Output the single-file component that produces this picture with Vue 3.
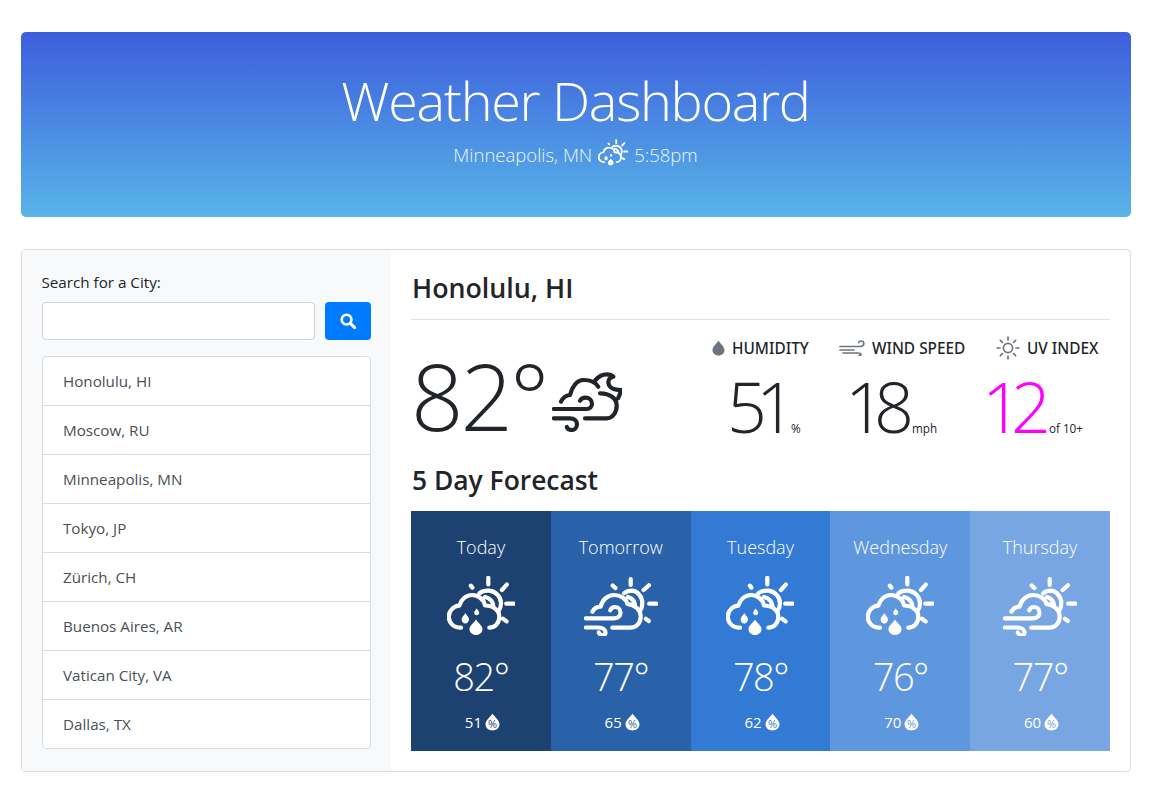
<template>
  <div class="container">
    <svg class="defs" width="0" height="0">
      <symbol id="rain-sun" viewBox="0 0 68 60">
        <g fill="none" stroke="currentColor" stroke-width="4.2" stroke-linecap="round" stroke-linejoin="round">
          <path d="M14 51.7C6 51.7 1.8 46.5 1.8 40.7C1.8 35 6.5 30 12.3 29.7C14 23.5 19 19 25 19C31.5 19 37 23.5 38 29.5C46.5 29.5 52.3 34.5 52.3 40.7C52.3 47 48 51.7 42.3 51.7"/>
          <path d="M32.3 17.3C35 15 38.5 14.5 42.3 14.7C49 15.5 54 21 54 27.3C54 30.5 53 33.3 51.3 35.7"/>
          <path d="M38 21C42 22 46 25 46.5 30.5"/>
          <path d="M41.3 1.8V8.5M23.8 9.6L25.4 11.6M54.9 14L59.8 8.6M59.2 27.7H66.8M56 42.8L59.6 45.4"/>
        </g>
        <path fill="currentColor" d="M29 43.5C31 47 35.5 49.5 35.5 53C35.5 56.6 32.6 59 29 59C25.4 59 22.5 56.6 22.5 53C22.5 49.5 27 47 29 43.5ZM18.3 37C19.5 39.3 22 41 22 43.5C22 45.8 20.3 47.5 18.3 47.5C16.3 47.5 14.6 45.8 14.6 43.5C14.6 41 17.1 39.3 18.3 37ZM29.7 32.5C30.5 34 32.2 35 32.2 36.7C32.2 38.2 31.1 39.2 29.7 39.2C28.3 39.2 27.2 38.2 27.2 36.7C27.2 35 28.9 34 29.7 32.5Z"/>
      </symbol>
      <symbol id="wind-sun" viewBox="0 0 74 60">
        <g fill="none" stroke="currentColor" stroke-width="4.2" stroke-linecap="round" stroke-linejoin="round">
          <path d="M8.4 35.7C10 32.5 13 30.7 16.7 30.7C18 24 23.5 19 30 19C36.5 19 42 22.5 43.3 27.8C51 28.5 56.7 34 56.7 40.7C56.7 47 52 51.7 46.7 51.7H28.3"/>
          <path d="M40 17.3C42.5 15.3 45 14.7 48.3 14.7C54 15.3 58.3 21 58.3 27.3C58.3 30 57.6 32.5 56.3 34.5"/>
          <path d="M44 21C47.5 22 50.5 25 51 29.5"/>
          <path d="M46.7 3.2V9M28.7 9.4L31.4 12.1M59.6 14L65 9.2M65.2 27.7H72.4M61.9 42.8L64.8 45"/>
          <path d="M1.8 42.3H30C34.5 42.3 36.5 39.5 36.5 36.5C36.5 33.2 33.8 31 31 31C28.6 31 26.8 32.5 26.2 34.3"/>
          <path d="M1.8 51.5H14.5C19 51.5 21.5 54 21.5 56.5C21.5 59 18.8 60 17.2 59C15.8 58.3 15 57.3 14.8 56.3"/>
        </g>
      </symbol>
      <symbol id="wind-moon" viewBox="0 0 70 60">
        <g fill="none" stroke="currentColor" stroke-width="4.2" stroke-linecap="round" stroke-linejoin="round">
          <path d="M1.8 37H34.7C38 37 40 34.5 40 31.8C40 28 37 25.7 33.5 25.7C31 25.7 29 27 28 28.7"/>
          <path d="M1.8 46.3H18C22.5 46.3 25 49 25 52C25 55.8 22.5 58 19.8 58C17.5 58 15.5 56.8 14.8 55"/>
          <path d="M9 29.7C11 25.5 14 23.3 18 23C20 14.5 25 8 31.5 8C38 8 44 10.5 46.3 14.7"/>
          <path d="M48 21.3C58 21.3 64.7 26.5 64.7 33.5C64.7 41 60 46.3 54.7 46.3H33"/>
          <path d="M43.5 8C47 4 51 2.3 54.7 2.3C57.5 2.3 59.8 3 61.3 4.7C58 5.5 56.3 7.5 56.3 10C56.3 14.5 60.5 18 69 18C68.3 21 67.5 24 66 26.3"/>
        </g>
      </symbol>
    </svg>

    <header class="banner">
      <h1 class="banner-title">Weather Dashboard</h1>
      <div class="banner-sub">
        <span>Minneapolis, MN</span>
        <svg class="banner-icon"><use href="#rain-sun" /></svg>
        <span>5:58pm</span>
      </div>
    </header>

    <main class="panel">
      <aside class="sidebar">
        <label class="search-label" for="city">Search for a City:</label>
        <div class="search-row">
          <input id="city" class="search-input" type="text" />
          <button class="search-btn" aria-label="Search">
            <svg width="16" height="16" viewBox="0 0 16 16" fill="none" stroke="#fff" stroke-linecap="round">
              <circle cx="6.6" cy="6.6" r="4.9" stroke-width="2.6" />
              <path d="M10.4 10.4L14.6 14.6" stroke-width="3" />
            </svg>
          </button>
        </div>
        <ul class="city-list">
          <li v-for="city in cities" :key="city">{{ city }}</li>
        </ul>
      </aside>

      <section class="content">
        <h2 class="city-name">Honolulu, HI</h2>
        <div class="now">
          <div class="now-temp">
            <span class="now-deg">82°</span>
            <svg class="now-icon"><use href="#wind-moon" /></svg>
          </div>
          <div class="stats">
            <div class="stat stat-hum">
              <div class="stat-head">
                <svg width="13" height="16" viewBox="0 0 13 16"><path fill="#6c757d" d="M6.5 0.5C8 3.5 12.5 6.5 12.5 10C12.5 13.3 9.8 15.5 6.5 15.5C3.2 15.5 0.5 13.3 0.5 10C0.5 6.5 5 3.5 6.5 0.5Z"/></svg>
                <span>Humidity</span>
              </div>
              <div class="stat-val"><b>51</b><small>%</small></div>
            </div>
            <div class="stat stat-wind">
              <div class="stat-head">
                <svg width="26" height="16" viewBox="0 0 26 16" fill="none" stroke="#6c757d" stroke-width="1.7" stroke-linecap="round">
                  <path d="M1 6.5H20.5C23 6.5 24.8 5.5 24.8 3.6C24.8 2 23.4 1 22 1C21 1 20 1.5 19.6 2.4"/>
                  <path d="M1 10H15"/>
                  <path d="M4 13H19C21 13 22 13.5 22 14.5C22 15.3 21 15.6 20 15.3"/>
                </svg>
                <span>Wind Speed</span>
              </div>
              <div class="stat-val"><b>18</b><small>mph</small></div>
            </div>
            <div class="stat stat-uv">
              <div class="stat-head">
                <svg width="24" height="24" viewBox="0 0 24 24" fill="none" stroke="#6c757d" stroke-width="1.7" stroke-linecap="round">
                  <circle cx="12" cy="12" r="4.6" />
                  <path d="M12 1.2V4M12 20V22.8M1.2 12H4M20 12H22.8M4.4 4.4L6.3 6.3M17.7 17.7L19.6 19.6M4.4 19.6L6.3 17.7M17.7 6.3L19.6 4.4"/>
                </svg>
                <span>UV Index</span>
              </div>
              <div class="stat-val uv"><b>12</b><small>of 10+</small></div>
            </div>
          </div>
        </div>

        <h3 class="forecast-title">5 Day Forecast</h3>
        <div class="forecast">
          <div v-for="day in forecast" :key="day.name" class="day" :style="{ background: day.color }">
            <div class="day-name">{{ day.name }}</div>
            <svg class="day-icon" :class="{ wide: day.icon === 'wind-sun' }"><use :href="'#' + day.icon" /></svg>
            <div class="day-temp">{{ day.temp }}°</div>
            <div class="day-hum">
              <span>{{ day.hum }}</span>
              <svg width="15" height="18" viewBox="0 0 15 18">
                <path fill="#fff" d="M7.5 0.5C9 3.5 14.5 7 14.5 11.3C14.5 15 11.4 17.5 7.5 17.5C3.6 17.5 0.5 15 0.5 11.3C0.5 7 6 3.5 7.5 0.5Z"/>
                <text x="7.5" y="14.6" text-anchor="middle" class="drop-text" :fill="day.color">%</text>
              </svg>
            </div>
          </div>
        </div>
      </section>
    </main>
  </div>
</template>

<script setup>
const cities = [
  'Honolulu, HI',
  'Moscow, RU',
  'Minneapolis, MN',
  'Tokyo, JP',
  'Zürich, CH',
  'Buenos Aires, AR',
  'Vatican City, VA',
  'Dallas, TX',
];

const forecast = [
  { name: 'Today', temp: 82, hum: 51, icon: 'rain-sun', color: '#1d4271' },
  { name: 'Tomorrow', temp: 77, hum: 65, icon: 'wind-sun', color: '#2a62a9' },
  { name: 'Tuesday', temp: 78, hum: 62, icon: 'rain-sun', color: '#337ad5' },
  { name: 'Wednesday', temp: 76, hum: 70, icon: 'rain-sun', color: '#5f97df' },
  { name: 'Thursday', temp: 77, hum: 60, icon: 'wind-sun', color: '#77a6e3' },
];
</script>

<style>
html, body {
  margin: 0;
  background: #fff;
}
</style>

<style scoped>
.container {
  width: 1110px;
  margin: 0 auto;
  padding-top: 32px;
  font-family: "Open Sans", "Noto Sans", sans-serif;
  font-size: 15.2px;
  color: #212529;
  box-sizing: border-box;
}
.defs {
  position: absolute;
}
.banner {
  height: 185px;
  box-sizing: border-box;
  padding-top: 31px;
  border-radius: 5px;
  background: linear-gradient(#3d5edc, #58b4e8);
  text-align: center;
  color: #fff;
}
.banner-title {
  margin: 0;
  font-size: 54px;
  font-weight: 300;
  letter-spacing: -1.3px;
  line-height: 74px;
}
.banner-sub {
  display: flex;
  justify-content: center;
  align-items: center;
  gap: 6px;
  height: 30px;
  margin-top: 2px;
  font-size: 18.5px;
  font-weight: 300;
  color: #eaf7ff;
}
.banner-icon {
  width: 30px;
  height: 27px;
  margin-top: -4px;
  color: #fff;
}
.panel {
  display: flex;
  margin-top: 32px;
  height: 523px;
  border: 1px solid #dadde0;
  border-radius: 4px;
  box-sizing: border-box;
  overflow: hidden;
}
.sidebar {
  flex: 0 0 369px;
  box-sizing: border-box;
  padding: 20px 20px 0;
  background: #f8f9fa;
}
.search-label {
  display: block;
  height: 32px;
  line-height: 24px;
}
.search-row {
  display: flex;
  gap: 10px;
}
.search-input {
  flex: 1;
  min-width: 0;
  height: 38px;
  box-sizing: border-box;
  border: 1px solid #ced4da;
  border-radius: 4px;
  background: #fff;
}
.search-btn {
  flex: 0 0 46px;
  height: 38px;
  padding: 0;
  border: 0;
  border-radius: 4px;
  background: #007bff;
  display: flex;
  align-items: center;
  justify-content: center;
}
.city-list {
  list-style: none;
  margin: 16px 0 0;
  padding: 0;
  border: 1px solid #dadde0;
  border-radius: 4px;
  background: #fff;
}
.city-list li {
  height: 48px;
  box-sizing: content-box;
  padding-left: 20.5px;
  line-height: 48px;
  color: #495057;
  border-bottom: 1px solid #dadde0;
}
.city-list li:last-child {
  border-bottom: 0;
}
.content {
  flex: 1;
  min-width: 0;
  padding: 20px 19.5px 0 20.5px;
}
.city-name {
  margin: 0;
  height: 49px;
  padding-left: 1px;
  font-size: 26.8px;
  font-weight: 600;
  line-height: 35px;
  border-bottom: 1px solid #dee2e6;
}
.now {
  display: flex;
  justify-content: space-between;
  height: 142px;
}
.now-temp {
  display: flex;
  align-items: flex-start;
  padding-top: 21px;
}
.now-deg {
  font-size: 92px;
  font-weight: 300;
  letter-spacing: -3px;
  line-height: 110px;
}
.now-icon {
  width: 70px;
  height: 60px;
  margin: 31px 0 0 6px;
  color: #212529;
}
.stats {
  display: grid;
  grid-template-columns: 97px 127px 103px;
  gap: 30px;
  padding: 15px 11px 0 0;
}
.stat {
  min-width: 0;
}
.stat-head {
  display: flex;
  align-items: center;
  gap: 7px;
  height: 26px;
  font-family: "Noto Sans", "Open Sans", sans-serif;
  font-size: 15.4px;
  font-weight: 500;
  white-space: nowrap;
  text-transform: uppercase;
}
.stat-val {
  display: flex;
  align-items: baseline;
  margin-top: 3px;
  white-space: nowrap;
}
.stat-val b {
  font-size: 70px;
  font-weight: 300;
  letter-spacing: -11px;
  line-height: 84px;
}
.stat-val small {
  margin-left: 9px;
  font-size: 11.7px;
}
.stat-hum .stat-val {
  padding-left: 15px;
}
.stat-hum .stat-val small {
  margin-left: 6px;
}
.stat-wind .stat-val {
  padding-left: 6px;
}
.stat-uv .stat-val {
  margin-left: -14px;
}
.uv b {
  color: #ff00ff;
}
.forecast-title {
  margin: 0;
  height: 49px;
  padding-left: 1px;
  font-size: 26.4px;
  font-weight: 600;
  line-height: 36px;
}
.forecast {
  display: flex;
  height: 240px;
}
.day {
  flex: 1;
  display: flex;
  flex-direction: column;
  align-items: center;
  color: #fff;
}
.day-name {
  margin-top: 22px;
  height: 28px;
  font-size: 18px;
  font-weight: 300;
  line-height: 28px;
}
.day-icon {
  width: 68px;
  height: 60px;
  margin-top: 15px;
}
.day-icon.wide {
  width: 74px;
}
.day-temp {
  margin-top: 13px;
  font-size: 38px;
  font-weight: 300;
  letter-spacing: -1.5px;
  line-height: 54px;
}
.day-hum {
  display: flex;
  align-items: center;
  gap: 3px;
  margin: 9px 0 0 3px;
  font-size: 15px;
}
.drop-text {
  font-size: 11px;
  font-family: "Open Sans", sans-serif;
}
</style>
